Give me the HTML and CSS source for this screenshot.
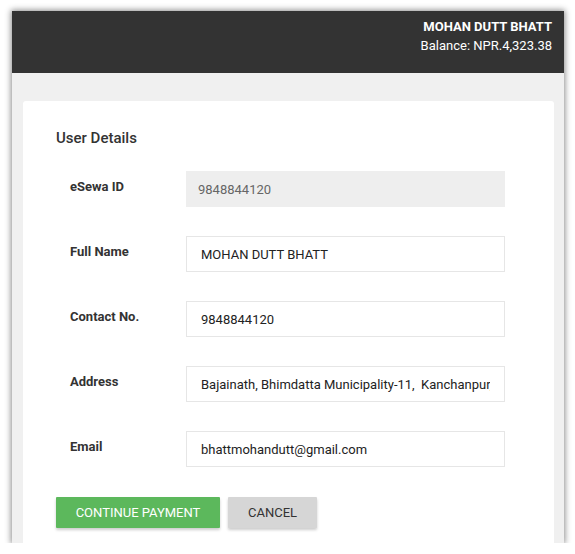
FILE: index.html
```html
<!DOCTYPE html>
<html lang="en">
  <head>
    <meta charset="UTF-8" />
    <meta name="viewport" content="width=device-width, initial-scale=1.0" />
    <title>eSewa - User Details</title>
    <link rel="stylesheet" href="styles.css">
  </head>
  <body>
    <div class="window">
      <div class="topbar">
        <div class="user-name">MOHAN DUTT BHATT</div>
        <div class="user-balance">Balance: NPR.4,323.38</div>
      </div>
      <div class="page">
        <div class="card">
          <h3 class="card-title">User Details</h3>
          <form class="details-form">
            <div class="form-row">
              <label class="form-label" for="esewa-id">eSewa ID</label>
              <input class="form-input" id="esewa-id" type="text" value="9848844120" readonly />
            </div>
            <div class="form-row">
              <label class="form-label" for="full-name">Full Name</label>
              <input class="form-input" id="full-name" type="text" value="MOHAN DUTT BHATT" />
            </div>
            <div class="form-row">
              <label class="form-label" for="contact">Contact No.</label>
              <input class="form-input" id="contact" type="text" value="9848844120" />
            </div>
            <div class="form-row">
              <label class="form-label" for="address">Address</label>
              <input class="form-input" id="address" type="text" value="Bajainath, Bhimdatta Municipality-11,  Kanchanpur, Nepal" />
            </div>
            <div class="form-row">
              <label class="form-label" for="email">Email</label>
              <input class="form-input" id="email" type="text" value="bhattmohandutt@gmail.com" />
            </div>
            <div class="form-actions">
              <button type="button" class="btn btn-success">Continue Payment</button>
              <button type="button" class="btn btn-default">Cancel</button>
            </div>
          </form>
        </div>
      </div>
    </div>
  </body>
</html>
```

FILE: styles.css
```css
* {
  box-sizing: border-box;
  margin: 0;
  padding: 0;
}

body {
  font-family: Roboto, "Liberation Sans", sans-serif;
  color: #333;
  background-color: #fff;
  padding: 11px 11px 0 12px;
}

.window {
  width: 552px;
  height: 532px;
  background-color: #f0f0f0;
  box-shadow: 0 0 6px 1px rgb(0 0 0 / 0.45);
  overflow: hidden;
}

.topbar {
  height: 62px;
  background-color: #333;
  color: #fff;
  text-align: right;
  padding: 6px 12px 0 0;
  font-size: 13px;
  line-height: 19px;
}

.user-name {
  font-weight: 700;
}

.page {
  padding: 28px 10px 0 11px;
}

.card {
  background-color: #fff;
  border-radius: 3px;
  padding: 27px 33px 40px;
  min-height: 480px;
}

.card-title {
  font-size: 15px;
  font-weight: 500;
  line-height: 20px;
  color: #333;
  margin-bottom: 23px;
}

.form-row {
  display: flex;
  align-items: flex-start;
  margin-bottom: 29px;
}

.form-label {
  width: 130px;
  padding: 7px 0 0 14px;
  font-size: 13px;
  font-weight: 700;
  line-height: 18px;
  color: #333;
}

.form-input {
  width: 319px;
  height: 36px;
  padding: 0 14px;
  border: 1px solid #e6e6e6;
  background-color: #fff;
  font-family: Roboto, "Liberation Sans", sans-serif;
  font-size: 13px;
  color: #222;
  outline: none;
}

.form-input[readonly] {
  background-color: #eee;
  border-color: #eee;
  color: #666;
  padding-left: 11px;
}

.form-actions {
  display: flex;
  gap: 8px;
  padding-top: 1px;
}

.btn {
  height: 31px;
  border: 0;
  border-radius: 1px;
  font-family: Roboto, "Liberation Sans", sans-serif;
  font-size: 13px;
  text-transform: uppercase;
  box-shadow: 0 2px 3px rgb(0 0 0 / 0.2);
  cursor: pointer;
}

.btn-success {
  width: 164px;
  background-color: #5cb85c;
  color: #fff;
}

.btn-default {
  width: 89px;
  background-color: #d6d6d6;
  color: #333;
}
```
